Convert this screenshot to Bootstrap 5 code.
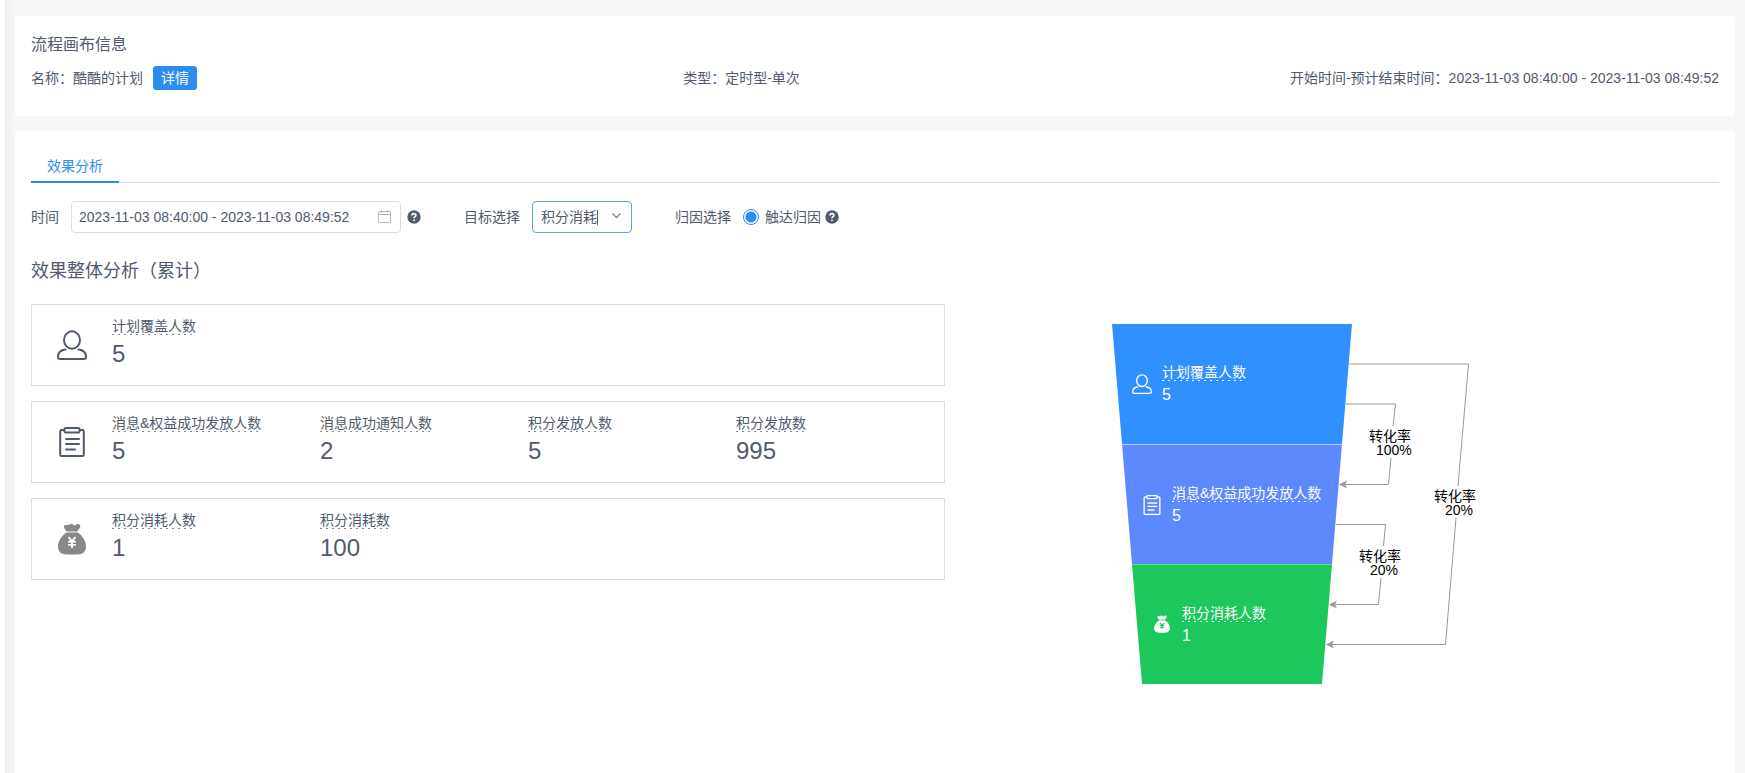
<!DOCTYPE html>
<html lang="zh-CN">
<head>
<meta charset="utf-8">
<meta name="viewport" content="width=device-width, initial-scale=1">
<title>效果分析</title>
<link href="https://cdn.jsdelivr.net/npm/bootstrap@5.3.0/dist/css/bootstrap.min.css" rel="stylesheet">
<style>
body{font-family:"Liberation Sans","Noto Sans CJK SC",sans-serif;font-size:14px;line-height:20px;color:#515a6e;background:#f5f7f9}
.page-shell{border-left:5px solid #fff;padding:16px 10px 0;background:linear-gradient(90deg,#eceef1,#f5f7f9 10px)}
.panel{background:#fff;border-radius:4px;padding:16px}
.panel-info{min-height:100px}
.panel-title{font-size:16px;line-height:24px;margin:1px 0 9px}
.btn-detail{--bs-btn-bg:#2d8cf0;--bs-btn-color:#fff;--bs-btn-border-color:#2d8cf0;--bs-btn-padding-x:7px;--bs-btn-padding-y:0;--bs-btn-font-size:14px;--bs-btn-line-height:22px;--bs-btn-border-radius:3px;margin-left:10px}
.period{min-width:441px}
.panel-main{margin-top:15px;border-radius:4px 4px 0 0}
.tab-bar{--bs-nav-tabs-border-color:#dcdee2;--bs-nav-tabs-border-radius:0;margin-top:9px}
.tab-bar .nav-link,.tab-bar .nav-link.active{border:0;border-bottom:2px solid #2d8cf0;color:#2d8cf0;padding:0 16px 5px;line-height:20px}
.field{height:32px;border:1px solid #dcdee2;border-radius:4px;font-size:14px;line-height:20px;color:#515a6e;background:#fff}
.filters{margin-top:18px}
.gap-field{margin-left:12px}
.gap-help{margin-left:6px}
.date-field{width:330px;padding:0 7px}
.date-field input{min-width:0;color:#515a6e;outline:0}
.goal-field{width:100px}
.goal-field select{appearance:none;width:100%;padding:0 8px;border-color:#57a3f3;outline:0}
.goal-field svg{right:10px;top:10px}
.text-caret{left:65px;top:9px;width:1px;height:15px;background:#515a6e}
.group-gap{margin-left:43px}
.radio-dot{appearance:none;width:16px;height:16px;border:1px solid #2d8cf0;border-radius:50%;background:radial-gradient(circle,#2d8cf0 5px,#fff 6px)}
.section-title{font-size:18px;line-height:26px;margin:25px 0 20px}
.stats-col{width:54.15%;gap:15px}
.stat-card{border:1px solid #dcdee2;height:82px;padding-top:12px}
.stat-icon{width:80px;height:56px}
.stat-label{height:18px;line-height:18px;background:repeating-linear-gradient(90deg,#888 0 2px,transparent 2px 6px) bottom/100% 1px no-repeat}
.stat-value{font-size:24px;line-height:36px;margin-top:-1px}
.bag-tone{color:#888}
.funnel{max-width:440px}
.funnel text{font-family:"Liberation Sans","Noto Sans CJK SC",sans-serif;font-size:14px;fill:#fff}
.funnel .num{font-size:16px}
.funnel .rate{fill:#000}
.funnel .under{stroke:#fff;stroke-dasharray:2 4}
.funnel .wire{fill:none;stroke:#999}
.funnel .bag-icon{--yen:#1cc75c}
</style>
</head>
<body>
<svg class="d-none" aria-hidden="true">
  <symbol id="i-user" viewBox="0 0 30 30"><g fill="none" stroke="currentColor" stroke-width="2" stroke-linecap="round"><ellipse cx="15" cy="10" rx="8" ry="8.700"/><path d="M8.500 19.500C3.500 20 1 23 1 27c0 1.400.6 2 2 2h24c1.400 0 2-.6 2-2 0-4-2.500-7-7.500-7.500"/></g></symbol>
  <symbol id="i-list" viewBox="0 0 30 30"><g fill="none" stroke="currentColor" stroke-width="2" stroke-linecap="round" stroke-linejoin="round"><path d="M7 3H4.500Q3.200 3 3.200 4.300v23.400Q3.200 29 4.500 29h21q1.300 0 1.300-1.300V4.300Q26.800 3 25.500 3H23"/><rect x="7.500" y="1" width="15" height="4.500" rx="1"/><path d="M9 12h13M9 17h13M9 22.500h9"/></g></symbol>
  <symbol id="i-bag" viewBox="0 0 30 32"><path fill="currentColor" d="M9.400 8C7.500 6.300 6.300 4 7.200 2.600c.9-1.300 2.800-.4 4-.6C12.300 1.800 13.300.6 14.600.8s1.500 1.500 2.700 1.600 2-1.700 3.800-1.500c2 .3 2.700 1.700 2 3.300-.7 1.500-1.700 2.600-2.700 3.800zM9.200 9.800h11.800c4.400 2.900 8 8.400 8 13.400 0 6.200-3.900 8.200-8.600 8.200H9.600C4.900 31.400 1 29.400 1 23.200c0-5 3.800-10.500 8.200-13.400z"/><path fill="currentColor" fill-opacity=".5" d="M9.400 8h11v1.800h-11z"/><path fill="none" stroke="var(--yen,#fff)" stroke-width="1.800" d="m11.500 14 3.500 4.200 3.500-4.200M11 18.600h8M11 21.800h8M15 18v7"/></symbol>
  <symbol id="i-help" viewBox="0 0 14 14"><circle cx="7" cy="7" r="6.700" fill="#515a6e"/><path d="M5 5.600C5 3 9 3.100 9 5.300 9 6.800 7 6.700 7 8.300M7 9.500v1.500" fill="none" stroke="#fff" stroke-width="1.600"/></symbol>
</svg>

<div class="page-shell min-vh-100 d-flex flex-column">
  <section class="panel panel-info">
    <h1 class="panel-title fw-normal">流程画布信息</h1>
    <div class="d-flex justify-content-between align-items-center">
      <div class="d-flex align-items-center me-2"><span>名称：酷酷的计划</span><button type="button" class="btn btn-detail">详情</button></div>
      <div>类型：定时型-单次</div>
      <div class="period text-end">开始时间-预计结束时间：2023-11-03 08:40:00 - 2023-11-03 08:49:52</div>
    </div>
  </section>

  <main class="panel panel-main flex-grow-1">
    <ul class="nav nav-tabs tab-bar"><li class="nav-item"><a class="nav-link active" href="#overall" aria-current="page">效果分析</a></li></ul>

    <form class="filters d-flex align-items-center">
      <label for="range">时间</label>
      <div class="field date-field gap-field d-flex align-items-center">
        <input id="range" class="border-0 p-0 flex-grow-1" type="text" value="2023-11-03 08:40:00 - 2023-11-03 08:49:52">
        <svg width="16" height="16" fill="none" stroke="#b4b7be"><path d="M1.500 2.500h12v11h-12zM1.500 5.500h12M4.500 1v3M10.500 1v3"/></svg>
      </div>
      <svg class="gap-help" width="14" height="14"><use href="#i-help"/></svg>
      <label class="group-gap" for="goal">目标选择</label>
      <div class="goal-field gap-field position-relative">
        <select id="goal" class="field"><option>积分消耗</option></select>
        <span class="text-caret position-absolute"></span>
        <svg class="position-absolute pe-none" width="11" height="10" fill="none" stroke="#808695" stroke-width="1.300"><path d="m1.500 2.500 4 4 4-4"/></svg>
      </div>
      <span class="group-gap">归因选择</span>
      <input class="radio-dot gap-field" type="radio" id="reach" name="attr" checked>
      <label class="gap-help me-1" for="reach">触达归因</label>
      <svg width="14" height="14"><use href="#i-help"/></svg>
    </form>

    <h2 class="section-title fw-normal" id="overall">效果整体分析（累计）</h2>

    <div class="d-flex">
      <div class="stats-col d-flex flex-column">
        <div class="stat-card d-flex">
          <div class="stat-icon d-flex align-items-center justify-content-center"><svg width="30" height="30"><use href="#i-user"/></svg></div>
          <div class="row g-0 flex-grow-1">
            <div class="col-3"><span class="stat-label d-inline-block align-top">计划覆盖人数</span><div class="stat-value">5</div></div>
          </div>
        </div>
        <div class="stat-card d-flex">
          <div class="stat-icon d-flex align-items-center justify-content-center"><svg width="30" height="30"><use href="#i-list"/></svg></div>
          <div class="row g-0 flex-grow-1">
            <div class="col-3"><span class="stat-label d-inline-block align-top">消息&amp;权益成功发放人数</span><div class="stat-value">5</div></div>
            <div class="col-3"><span class="stat-label d-inline-block align-top">消息成功通知人数</span><div class="stat-value">2</div></div>
            <div class="col-3"><span class="stat-label d-inline-block align-top">积分发放人数</span><div class="stat-value">5</div></div>
            <div class="col-3"><span class="stat-label d-inline-block align-top">积分发放数</span><div class="stat-value">995</div></div>
          </div>
        </div>
        <div class="stat-card d-flex">
          <div class="stat-icon bag-tone d-flex align-items-center justify-content-center"><svg width="30" height="32"><use href="#i-bag"/></svg></div>
          <div class="row g-0 flex-grow-1">
            <div class="col-3"><span class="stat-label d-inline-block align-top">积分消耗人数</span><div class="stat-value">1</div></div>
            <div class="col-3"><span class="stat-label d-inline-block align-top">积分消耗数</span><div class="stat-value">100</div></div>
          </div>
        </div>
      </div>

      <div class="flex-fill d-flex justify-content-center align-items-start">
        <svg class="funnel w-100" viewBox="0 0 440 380" role="img" aria-label="转化漏斗">
          <path fill="#2f90ff" d="M0 20h240l-10 120H10z"/>
          <path fill="#5d89ff" d="M10 140h220l-10 120H20z"/>
          <path fill="#1cc75c" d="M20 260h200l-10 120H30z"/>
          <path stroke="#fff" stroke-opacity=".6" d="M10 140.500h220"/>
          <path stroke="#fff" stroke-opacity=".3" d="M20 260.500h200"/>

          <g color="#fff">
            <svg x="20" y="70" width="20" height="20"><use href="#i-user"/></svg>
            <svg x="30" y="191" width="20" height="20"><use href="#i-list"/></svg>
            <svg class="bag-icon" x="41" y="311" width="18" height="18"><use href="#i-bag"/></svg>
          </g>
          <text x="50" y="73">计划覆盖人数</text><path class="under" d="M50 76.500h84"/><text class="num" x="50" y="96">5</text>
          <text x="60" y="194">消息&amp;权益成功发放人数</text><path class="under" d="M60 197.500h149"/><text class="num" x="60" y="217">5</text>
          <text x="70" y="314">积分消耗人数</text><path class="under" d="M70 317.500h84"/><text class="num" x="70" y="337">1</text>

          <path class="wire" d="M237 60h119.500L346 182M344 214l-10.500 126.500H220"/>
          <path class="wire" d="M234 100h49.500L281 122M279 154l-2.500 26.500H233"/>
          <path class="wire" d="M224 220.500h49.500L271.500 242M269 274l-2.500 26.500H223"/>
          <path fill="#999" d="m214 340.500 8-4-2 4 2 4zM227 180.500l8-4-2 4 2 4zM217 300.500l8-4-2 4 2 4z"/>
          <text class="rate" x="257" y="137">转化率</text><text class="rate" x="264" y="151">100%</text>
          <text class="rate" x="322" y="197">转化率</text><text class="rate" x="333" y="211">20%</text>
          <text class="rate" x="247" y="257">转化率</text><text class="rate" x="258" y="271">20%</text>
        </svg>
      </div>
    </div>
  </main>
</div>
<script src="https://cdn.jsdelivr.net/npm/bootstrap@5.3.0/dist/js/bootstrap.bundle.min.js"></script>
</body>
</html>
